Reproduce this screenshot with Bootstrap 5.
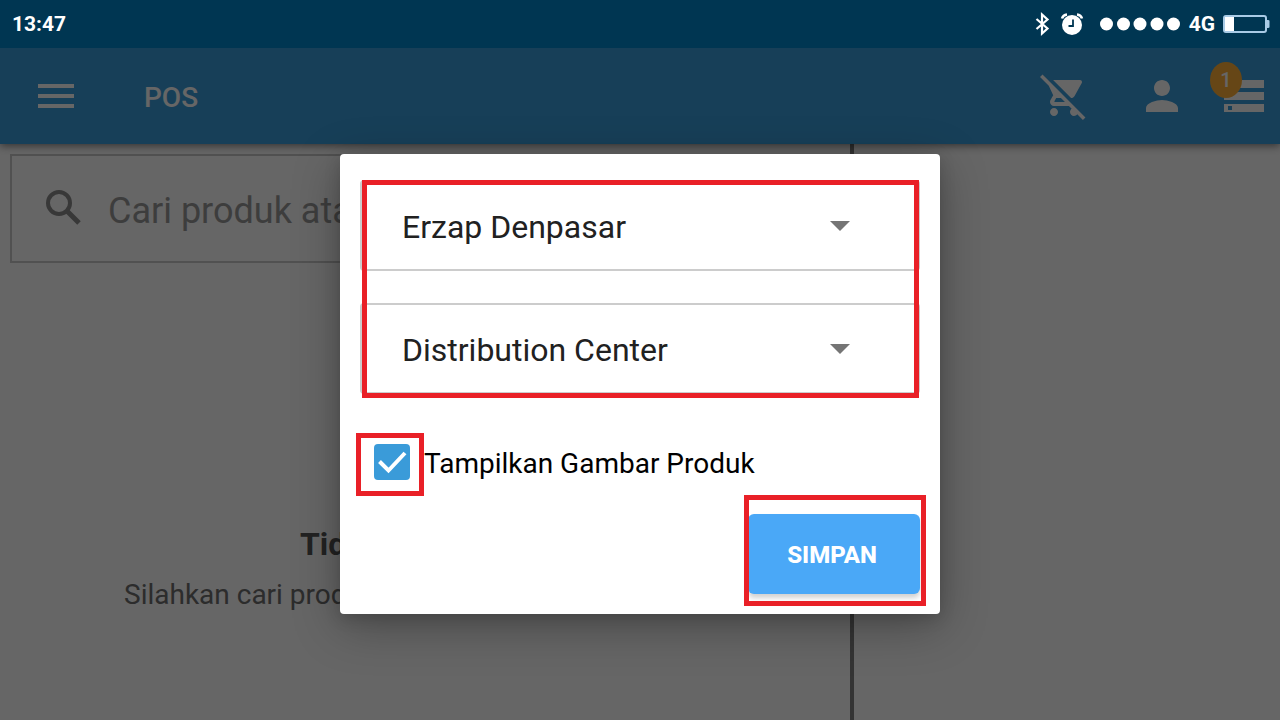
<!DOCTYPE html>
<html lang="id">
<head>
<meta charset="utf-8">
<meta name="viewport" content="width=device-width, initial-scale=1">
<title>POS</title>
<link rel="stylesheet" href="https://cdn.jsdelivr.net/npm/bootstrap@5.3.0/dist/css/bootstrap.min.css">
<style>
  body { font-family: Roboto, "Noto Sans", sans-serif; background: #fff; }
  svg { display: block; fill: currentColor; }
  .status-bar { height: 48px; background: #003652; color: #fff; font-size: 21px; line-height: 28px; font-weight: 700; padding: 0 10px 0 12px; z-index: 2; }
  .app-bar { height: 96px; background: #3a9ddc; color: #fff; padding: 0 16px 0 32px; box-shadow: 0 2px 8px rgba(0,0,0,.5); z-index: 1; }
  .app-title { font-size: 28px; line-height: 36px; font-weight: 500; padding-top: 4px; }
  .icon-btn { color: inherit; background: none; border: 0; padding: 0; }
  .bar-actions { gap: 50px; }
  .bar-orders { margin-left: -12px; }
  .count-dot { left: -14px; top: -18px; width: 32px; height: 36px; border-radius: 50%; background: #ffb038; font-size: 20px; font-weight: 500; }
  .catalog { width: 66.7%; border-right: 4px solid #828282; padding: 10px; }
  .search-box { height: 109px; border: 2px solid #cacaca; padding: 0 32px; gap: 24px; color: #8c8c8c; }
  .search-box input { font-size: 36px; line-height: 44px; color: #999; background: none; border: 0; outline: 0; padding: 4px 0 0; }
  .search-box input::placeholder { color: #999; opacity: 1; }
  .empty-note { color: #6e6e6e; padding: 261px 0 0 114px; font-size: 28px; line-height: 36px; }
  .empty-note h2 { color: #555; font-size: 32px; line-height: 40px; font-weight: 700; margin: 0 0 13px 176px; }
  .scrim { inset: 0; background: rgba(0,0,0,.6); z-index: 2; }
  .dialog-card { width: 600px; background: #fff; border-radius: 4px; padding: 26px 20px 20px; box-shadow: 0 12px 48px rgba(0,0,0,.3), 0 4px 16px rgba(0,0,0,.15); }
  .outlet-select { height: 91px; border: 2px solid #ccc; border-radius: 4px; padding: 2px 40px 0; font-size: 32px; line-height: 40px; color: #212121;
    background: #fff url("data:image/svg+xml,%3Csvg xmlns='http://www.w3.org/2000/svg' viewBox='0 0 20 10'%3E%3Cpath d='M0 0h20L10 10z' fill='%23757575'/%3E%3C/svg%3E") no-repeat right 68px center / 20px 10px; }
  .field-stack { gap: 32px; }
  .marked::after { content: ""; position: absolute; border: 5px solid #e92027; pointer-events: none; }
  .mark-fields::after { inset: 0 1px -4px 2px; }
  .mark-check::after { inset: -11px -14px -16px -18px; }
  .mark-save::after { inset: -19px -6px -12px -4px; }
  .check-row { margin: 50px 0 0 14px; gap: 14px; font-size: 28px; line-height: 32px; color: #000; }
  .check-row label { padding-top: 4px; }
  .image-check.form-check-input { width: 36px; height: 36px; border: 0; border-radius: 4px; margin: 0; }
  .image-check.form-check-input:checked { background: #3a9bd9 url("data:image/svg+xml,%3Csvg xmlns='http://www.w3.org/2000/svg' viewBox='0 0 36 36'%3E%3Cpath d='M5.500 17.500l9 9L31 9' fill='none' stroke='%23fff' stroke-width='4'/%3E%3C/svg%3E") center / 36px; }
  .save-btn { width: 172px; height: 80px; background: #4aa8f7; color: #fff; font-size: 24px; font-weight: 800; border: 0; border-radius: 6px; padding: 2px 4px 0 0; box-shadow: 0 4px 5px rgba(0,0,0,.18); }
  .save-row { margin-top: 34px; }
</style>
</head>
<body class="d-flex flex-column vh-100 overflow-hidden">
<header class="status-bar position-relative d-flex align-items-center justify-content-between flex-shrink-0">
  <span>13:47</span>
  <div class="d-flex align-items-center">
    <svg class="me-2" width="20" height="24" viewBox="0 0 20 24" aria-hidden="true"><path d="M4.500 7l11 9.500-5.500 5V2.500l5.500 5L4.500 17" fill="none" stroke="#fff" stroke-width="2.200"/></svg>
    <svg class="me-3" width="24" height="24" viewBox="0 0 24 24" aria-hidden="true"><circle cx="12" cy="13" r="10"/><path d="M2 6.500Q3 3 7 2.500M22 6.500Q21 3 17 2.500" fill="none" stroke="#fff" stroke-width="2.500"/><path d="M13 7.500V14H8.500" fill="none" stroke="#003652" stroke-width="1.800"/></svg>
    <svg class="me-2" width="81" height="14" viewBox="0 0 81 14" aria-hidden="true"><circle cx="6.500" cy="7" r="6.500"/><circle cx="23.500" cy="7" r="6.500"/><circle cx="40" cy="7" r="6.500"/><circle cx="57" cy="7" r="6.500"/><circle cx="73.500" cy="7" r="6.500"/></svg>
    <span class="me-2">4G</span>
    <svg width="47" height="18" viewBox="0 0 47 18" aria-hidden="true"><rect x="1" y="1" width="42" height="16" rx="2" fill="none" stroke="#a9cbe6" stroke-width="2"/><path d="M2 2h9v14H2z"/><path d="M44 5h1q1.500 0 1.500 1v6q0 1-1.500 1h-1z" fill="#a9cbe6"/></svg>
  </div>
</header>
<div class="position-relative d-flex flex-column flex-grow-1">
  <nav class="app-bar position-relative d-flex align-items-center flex-shrink-0">
    <button class="icon-btn" type="button" aria-label="Menu"><svg width="48" height="48" viewBox="0 0 24 24"><path d="M3 18h18v-2H3v2zm0-5h18v-2H3v2zm0-7v2h18V6H3z"/></svg></button>
    <span class="app-title ms-5 ps-3 me-auto">POS</span>
    <div class="bar-actions d-flex align-items-center">
      <button class="icon-btn" type="button" aria-label="Kosongkan keranjang"><svg width="48" height="48" viewBox="0 0 24 24"><path d="M22.730 22.730L2.770 2.770 2 2l-.730-.730L0 2.540l4.390 4.390 2.210 4.660-1.350 2.450c-.160.280-.250.610-.250.960 0 1.100.900 2 2 2h7.460l1.380 1.380c-.500.360-.830.950-.830 1.620 0 1.100.890 2 1.990 2 .670 0 1.260-.330 1.620-.840L21.460 24l1.270-1.270zM7.420 15c-.140 0-.250-.110-.250-.250l.030-.120.900-1.630h2.360l2 2H7.420zm8.130-2c.750 0 1.410-.410 1.750-1.030l3.580-6.490c.080-.140.120-.310.120-.480 0-.550-.450-1-1-1H6.540l9.010 9zM7 18c-1.100 0-1.990.900-1.990 2S5.900 22 7 22s2-.900 2-2-.900-2-2-2z"/></svg></button>
      <button class="icon-btn" type="button" aria-label="Pelanggan"><svg width="48" height="48" viewBox="0 0 24 24"><path d="M12 12c2.210 0 4-1.790 4-4s-1.790-4-4-4-4 1.790-4 4 1.790 4 4 4zm0 2c-2.670 0-8 1.340-8 4v2h16v-2c0-2.660-5.330-4-8-4z"/></svg></button>
      <button class="icon-btn bar-orders position-relative" type="button" aria-label="Pesanan"><svg width="40" height="32" viewBox="0 0 40 32"><path d="M0 0h40v8H0zM0 12h40v8H0zM0 24h40v8H0zm4 2v4h4v-4z" fill-rule="evenodd"/></svg>
        <span class="count-dot position-absolute d-flex align-items-center justify-content-center">1</span></button>
    </div>
  </nav>
  <main class="d-flex flex-grow-1">
    <section class="catalog">
      <label class="search-box d-flex align-items-center">
        <svg class="flex-shrink-0" width="40" height="48" viewBox="0 0 40 48" aria-hidden="true"><circle cx="15" cy="18" r="11" fill="none" stroke="currentColor" stroke-width="4"/><path d="M23 26l12 12" stroke="currentColor" stroke-width="5"/></svg>
        <input class="flex-grow-1" type="text" placeholder="Cari produk ata" aria-label="Cari produk">
      </label>
      <div class="empty-note"><h2>Tid</h2><p class="m-0">Silahkan cari prod</p></div>
    </section>
    <aside class="flex-grow-1"></aside>
  </main>
  <div class="scrim position-absolute d-flex align-items-center justify-content-center">
    <form class="dialog-card" role="dialog" aria-label="Pengaturan POS">
      <div class="field-stack marked mark-fields position-relative d-flex flex-column">
        <select class="outlet-select form-select" aria-label="Outlet"><option>Erzap Denpasar</option></select>
        <select class="outlet-select form-select" aria-label="Gudang"><option>Distribution Center</option></select>
      </div>
      <div class="check-row d-flex align-items-center">
        <span class="marked mark-check position-relative"><input class="image-check form-check-input d-block" type="checkbox" id="showImages" checked></span>
        <label for="showImages">Tampilkan Gambar Produk</label>
      </div>
      <div class="save-row d-flex justify-content-end">
        <span class="marked mark-save position-relative"><button class="save-btn d-block" type="button">SIMPAN</button></span>
      </div>
    </form>
  </div>
</div>
<script src="https://cdn.jsdelivr.net/npm/bootstrap@5.3.0/dist/js/bootstrap.bundle.min.js"></script>
</body>
</html>
